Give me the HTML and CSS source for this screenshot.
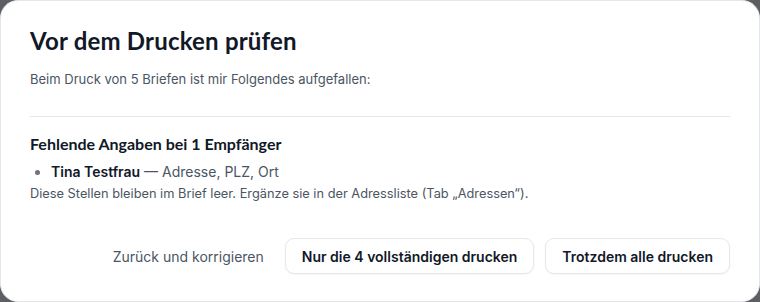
FILE: index.html
```html
<!DOCTYPE html>
<html lang="de">
<head>
  <meta charset="UTF-8" />
  <title>Vor dem Drucken prüfen</title>
  <link rel="stylesheet" href="styles.css">
</head>
<body>
  <div class="dialog">
    <h2 class="dialog-title">Vor dem Drucken prüfen</h2>
    <p class="dialog-intro">Beim Druck von 5 Briefen ist mir Folgendes aufgefallen:</p>

    <div class="issue">
      <h3 class="issue-title">Fehlende Angaben bei 1 Empfänger</h3>
      <ul class="issue-list">
        <li><strong>Tina Testfrau</strong> — Adresse, PLZ, Ort</li>
      </ul>
      <p class="issue-note">Diese Stellen bleiben im Brief leer. Ergänze sie in der Adressliste (Tab „Adressen“).</p>
    </div>

    <div class="dialog-actions">
      <button class="btn btn-ghost">Zurück und korrigieren</button>
      <button class="btn btn-outline">Nur die 4 vollständigen drucken</button>
      <button class="btn btn-outline">Trotzdem alle drucken</button>
    </div>
  </div>
</body>
</html>
```

FILE: styles.css
```css
html, body {
  margin: 0;
  padding: 0;
  height: 100%;
}

body {
  background-color: #5c5e62;
  font-family: Inter, 'Liberation Sans', sans-serif;
  color: #111827;
}

.dialog {
  box-sizing: border-box;
  width: 760px;
  height: 302px;
  background-color: #fff;
  border: 1px solid #e3e6eb;
  border-radius: 18px;
  padding: 26px 29px 0 29px;
}

.dialog-title {
  font-family: Lato, 'Open Sans', sans-serif;
  font-size: 24px;
  font-weight: 700;
  color: #111827;
  margin: 0;
  line-height: 28px;
  letter-spacing: 0.2px;
}

.dialog-intro {
  font-size: 13px;
  color: #4b5563;
  margin: 15px 0 0 0;
  line-height: 18px;
}

.issue {
  margin-top: 28px;
  border-top: 1px solid #e5e7eb;
  padding-top: 16px;
}

.issue-title {
  font-family: Lato, 'Open Sans', sans-serif;
  font-size: 16px;
  font-weight: 700;
  color: #111827;
  margin: 0;
  line-height: 22px;
}

.issue-list {
  margin: 7px 0 0 0;
  padding-left: 21px;
  font-size: 14px;
  line-height: 20px;
  color: #4b5563;
}

.issue-list li::marker {
  color: #6b7280;
}

.issue-list strong {
  color: #111827;
  font-weight: 600;
}

.issue-note {
  margin: 3px 0 0 0;
  font-size: 12.8px;
  line-height: 18px;
  color: #4b5563;
}

.dialog-actions {
  display: flex;
  justify-content: flex-end;
  align-items: center;
  gap: 11px;
  margin-top: 35px;
}

.btn {
  font-family: Inter, 'Liberation Sans', sans-serif;
  font-size: 14px;
  height: 36px;
  padding: 0 16px;
  border-radius: 9px;
  cursor: pointer;
  background: #fff;
}

.btn-ghost {
  border: 1px solid transparent;
  color: #4b5563;
  font-weight: 400;
  padding-right: 9px;
}

.btn-outline {
  border: 1px solid #e5e7eb;
  color: #111827;
  font-weight: 600;
  box-shadow: 0 1px 2px rgba(0, 0, 0, 0.04);
}
```
